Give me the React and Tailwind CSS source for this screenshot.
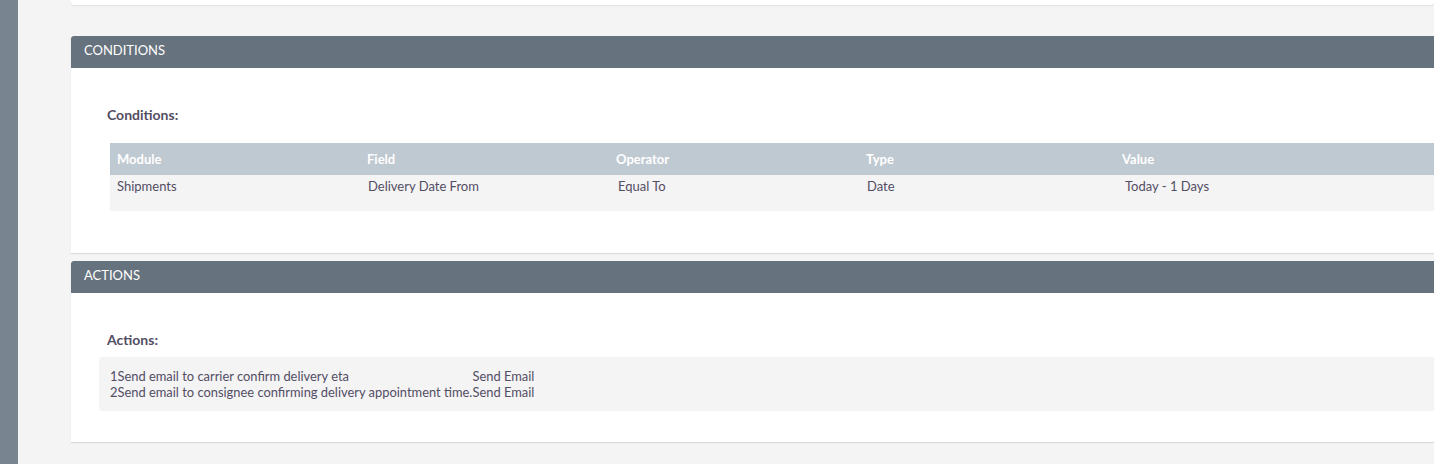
import React from 'react';

const conditionCols = [
  { head: 'Module', value: 'Shipments', pad: 'pl-[7px]' },
  { head: 'Field', value: 'Delivery Date From', pad: 'pl-[8px]' },
  { head: 'Operator', value: 'Equal To', pad: 'pl-[9px]' },
  { head: 'Type', value: 'Date', pad: 'pl-[8px]' },
  { head: 'Value', value: 'Today - 1 Days', pad: 'pl-[10px]' },
];

const actions = [
  { n: '1', name: 'Send email to carrier confirm delivery eta', type: 'Send Email' },
  { n: '2', name: 'Send email to consignee confirming delivery appointment time.', type: 'Send Email' },
];

function PanelHeader({ title }) {
  return (
    <div className="h-[32px] flex items-center pl-[13px] pb-[4px] bg-[#66727e] rounded-tl-[3px] text-white text-[13px] leading-none">
      {title}
    </div>
  );
}

export default function App() {
  return (
    <div className="flex w-[1434px] h-[464px] overflow-hidden bg-[#f4f4f4] text-[#534d64]" style={{ fontFamily: 'Lato, "Open Sans", sans-serif' }}>
      {/* sidebar edge */}
      <div className="w-[18px] shrink-0 bg-[#788590]" />

      <div className="flex-1 flex flex-col pl-[53px]">
        {/* previous panel, cut off */}
        <div className="h-[5px] bg-white rounded-b-[3px] shadow-[0_1px_1px_rgba(0,0,0,0.08)]" />

        {/* Conditions */}
        <div className="mt-[31px] bg-white shadow-[0_1px_1px_rgba(0,0,0,0.1)]">
          <PanelHeader title="CONDITIONS" />
          <div className="h-[185px] pt-[37px] pl-[36px]">
            <div className="text-[14px] font-bold leading-[20px]">Conditions:</div>
            <div className="mt-[18px] ml-[3px]">
              <div className="grid grid-cols-[250px_249px_250px_256px_1fr] h-[32px] bg-[#bfc9d1] items-center text-white font-bold text-[13px] pt-[1px]">
                {conditionCols.map((c) => (
                  <div key={c.head} className="pl-[7px]">{c.head}</div>
                ))}
              </div>
              <div className="grid grid-cols-[250px_249px_250px_256px_1fr] h-[36px] bg-[#f4f4f4] text-[13px] leading-[20px] pt-[1px]">
                {conditionCols.map((c) => (
                  <div key={c.head} className={c.pad}>{c.value}</div>
                ))}
              </div>
            </div>
          </div>
        </div>

        {/* Actions */}
        <div className="mt-[8px] bg-white shadow-[0_1px_1px_rgba(0,0,0,0.1)]">
          <PanelHeader title="ACTIONS" />
          <div className="h-[149px] pt-[37px] pl-[28px]">
            <div className="text-[14px] font-bold leading-[20px] pl-[8px]">Actions:</div>
            <div className="mt-[7px] bg-[#f4f4f4] rounded-l-[3px] pt-[11px] pb-[11px] pl-[11px]">
              <table className="text-[12.9px] leading-[16px] border-collapse">
                <tbody>
                  {actions.map((a) => (
                    <tr key={a.n}>
                      <td className="p-0">{a.n}</td>
                      <td className="p-0">{a.name}</td>
                      <td className="p-0">{a.type}</td>
                    </tr>
                  ))}
                </tbody>
              </table>
            </div>
          </div>
        </div>
      </div>
    </div>
  );
}
